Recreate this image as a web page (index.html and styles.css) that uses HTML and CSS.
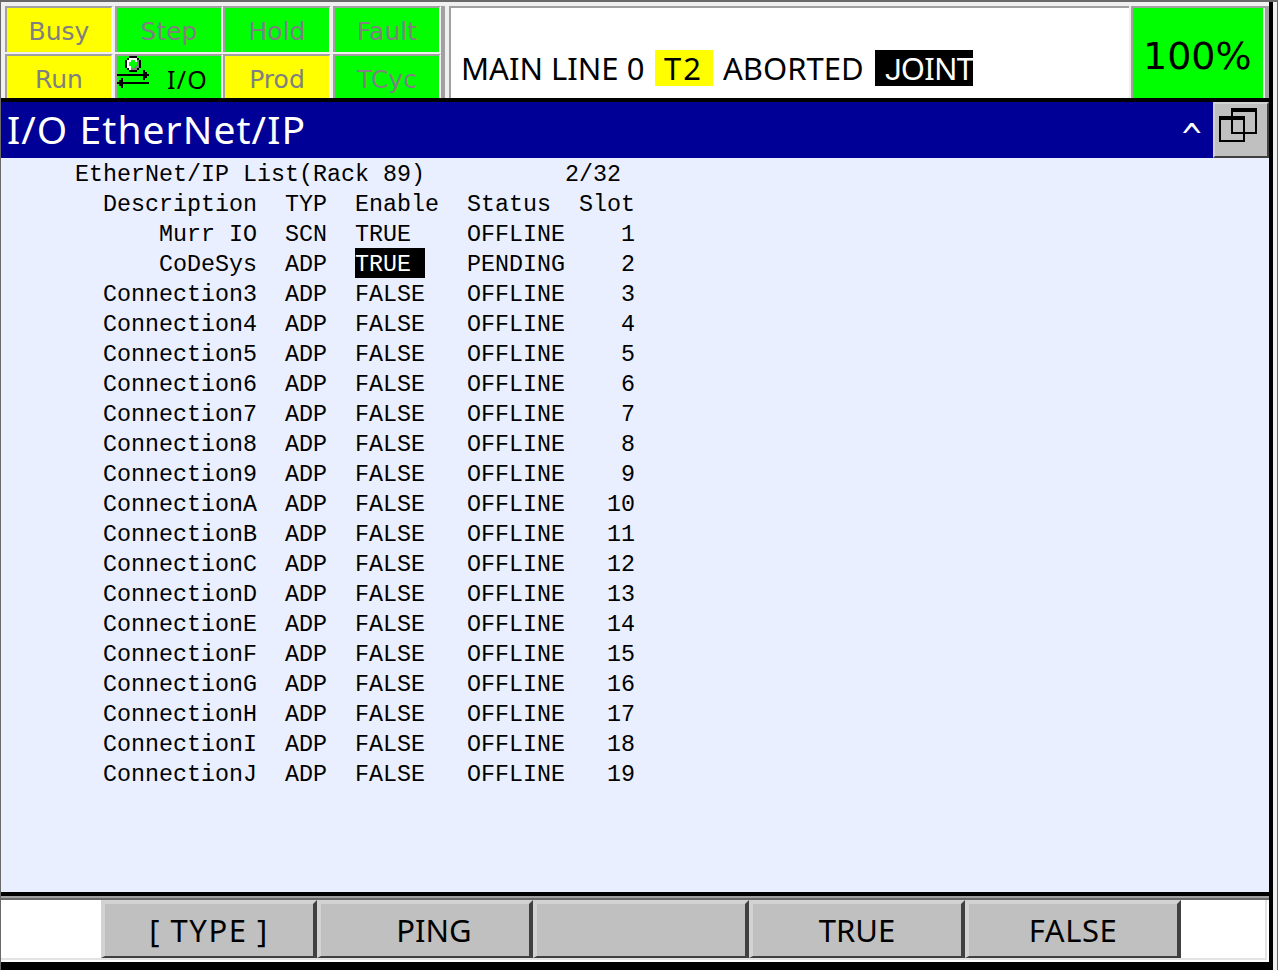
FILE: index.html
```html
<!DOCTYPE html>
<html lang="en">
<head>
<meta charset="utf-8">
<title>I/O EtherNet/IP</title>
<link rel="stylesheet" href="styles.css">
</head>
<body>
<div class="frame">
  <div class="screen">
    <header class="status">
      <div class="lamps">
        <div class="lamp yellow"><span>Busy</span></div>
        <div class="lamp green"><span>Step</span></div>
        <div class="lamp green"><span>Hold</span></div>
        <div class="lamp green"><span>Fault</span></div>
        <div class="lamp yellow low"><span>Run</span></div>
        <div class="lamp green low io">
          <svg class="io-icon" width="32" height="34" viewBox="0 0 32 34" shape-rendering="crispEdges">
            <path d="M0 18h26v-4h2v2h2v2h2v2h-2v2h-2v2h-2v-4H0zM32 26H6v-4H4v2H2v2H0v2h2v2h2v2h2v-4h26z" fill="#000"/>
            <path d="M12 0h8v2h2v2h2v8h-2v2h-2v2h-8v-2h-2v-2H8V4h2V2h2z" fill="#000"/>
            <path d="M12 2h8v2h2v8h-2v2h-8v-2h-2V4h2z" fill="#fff"/>
            <path d="M20 4h2v8h-2v2h-6v-2h4v-2h2z" fill="#808080"/>
            <path d="M14 4h4v2h2v4h-2v2h-4v-2h-2V6h2z" fill="#0f0"/>
          </svg>
          <span>I/O</span>
        </div>
        <div class="lamp yellow low"><span>Prod</span></div>
        <div class="lamp green low"><span>TCyc</span></div>
      </div>
      <div class="message"><span class="prog">MAIN LINE 0</span><span class="mode">T2</span><span class="state">ABORTED</span><span class="coord"><span class="j">J</span>OINT</span></div>
      <div class="override"><span>100%</span></div>
    </header>
    <div class="titlebar">
      <h1>I/O EtherNet/IP</h1>
      <span class="caret">^</span>
      <div class="windows">
        <svg width="38" height="34" viewBox="0 0 38 34" shape-rendering="crispEdges">
          <path fill-rule="evenodd" d="M12 0h26v26H12zM14 4v20h22V4z"/>
          <path fill-rule="evenodd" d="M0 8h26v26H0zM2 12v20h22V12z"/>
        </svg>
      </div>
    </div>
    <main class="list">
      <div class="caption"><span>EtherNet/IP List(Rack 89)</span><span>2/32</span></div>
      <div class="row"><span>Description</span><span>TYP</span><span>Enable</span><span>Status</span><span>Slot</span></div>
      <div class="row"><span>Murr IO</span><span>SCN</span><span>TRUE</span><span>OFFLINE</span><span>1</span></div>
      <div class="row"><span>CoDeSys</span><span>ADP</span><span class="selected">TRUE</span><span>PENDING</span><span>2</span></div>
      <div class="row"><span>Connection3</span><span>ADP</span><span>FALSE</span><span>OFFLINE</span><span>3</span></div>
      <div class="row"><span>Connection4</span><span>ADP</span><span>FALSE</span><span>OFFLINE</span><span>4</span></div>
      <div class="row"><span>Connection5</span><span>ADP</span><span>FALSE</span><span>OFFLINE</span><span>5</span></div>
      <div class="row"><span>Connection6</span><span>ADP</span><span>FALSE</span><span>OFFLINE</span><span>6</span></div>
      <div class="row"><span>Connection7</span><span>ADP</span><span>FALSE</span><span>OFFLINE</span><span>7</span></div>
      <div class="row"><span>Connection8</span><span>ADP</span><span>FALSE</span><span>OFFLINE</span><span>8</span></div>
      <div class="row"><span>Connection9</span><span>ADP</span><span>FALSE</span><span>OFFLINE</span><span>9</span></div>
      <div class="row"><span>ConnectionA</span><span>ADP</span><span>FALSE</span><span>OFFLINE</span><span>10</span></div>
      <div class="row"><span>ConnectionB</span><span>ADP</span><span>FALSE</span><span>OFFLINE</span><span>11</span></div>
      <div class="row"><span>ConnectionC</span><span>ADP</span><span>FALSE</span><span>OFFLINE</span><span>12</span></div>
      <div class="row"><span>ConnectionD</span><span>ADP</span><span>FALSE</span><span>OFFLINE</span><span>13</span></div>
      <div class="row"><span>ConnectionE</span><span>ADP</span><span>FALSE</span><span>OFFLINE</span><span>14</span></div>
      <div class="row"><span>ConnectionF</span><span>ADP</span><span>FALSE</span><span>OFFLINE</span><span>15</span></div>
      <div class="row"><span>ConnectionG</span><span>ADP</span><span>FALSE</span><span>OFFLINE</span><span>16</span></div>
      <div class="row"><span>ConnectionH</span><span>ADP</span><span>FALSE</span><span>OFFLINE</span><span>17</span></div>
      <div class="row"><span>ConnectionI</span><span>ADP</span><span>FALSE</span><span>OFFLINE</span><span>18</span></div>
      <div class="row"><span>ConnectionJ</span><span>ADP</span><span>FALSE</span><span>OFFLINE</span><span>19</span></div>
    </main>
    <nav class="keys">
      <div class="key"><span class="type">[ TYPE ]</span></div>
      <div class="key ping"><span>PING</span></div>
      <div class="key"></div>
      <div class="key"><span>TRUE</span></div>
      <div class="key"><span class="false">FALSE</span></div>
    </nav>
  </div>
</div>
</body>
</html>
```
FILE: styles.css
```css
* { box-sizing: border-box; }
body { margin: 0; width: 1278px; height: 970px; overflow: hidden; background: #f0f0f0; font-family: "Noto Sans", sans-serif; color: #000; }
.frame { width: 1278px; height: 970px; border-left: 1px solid #696969; border-top: 2px solid #696969; border-right: 1px solid #696969; background: #f0f0f0; }
.screen { width: 1272px; height: 968px; border-right: 4px solid #000; border-bottom: 8px solid #000; display: flex; flex-direction: column; }

.status { height: 100px; flex: none; display: flex; background: #f0f0f0; border-bottom: 4px solid #000; padding-top: 4px; }
.lamps { width: 444px; height: 92px; padding-left: 4px; display: grid; grid-template-columns: 110px 108px 110px 108px; grid-template-rows: 48px 44px; border-right: 4px solid #a0a0a0; }
.lamp { height: 46px; width: 108px; border-left: 2px solid #a0a0a0; border-top: 2px solid #a0a0a0; border-right: 2px solid #fff; color: #808080; font: 25px/48px "DejaVu Sans", sans-serif; text-align: center; position: relative; }
.low { height: 44px; }
.yellow { background: #ff0; }
.green { background: #0f0; }
.io { color: #000; font-family: "Noto Sans", sans-serif; letter-spacing: 1.2px; line-height: 46px; display: flex; justify-content: flex-end; padding-right: 13px; }
.io-icon { position: absolute; left: 0; top: 0; }
.message { width: 680px; height: 92px; margin-left: 4px; background: #fff; border-left: 2px solid #a0a0a0; border-top: 2px solid #a0a0a0; display: flex; font-size: 31px; line-height: 36px; padding: 42px 0 8px 10px; white-space: nowrap; }
.message > span { height: 36px; }
.prog { width: 194px; }
.mode { width: 58px; padding-left: 9px; background: #ff0; letter-spacing: 2px; }
.state { width: 162px; padding-left: 10px; }
.coord { width: 98px; padding-left: 10px; background: #000; color: #fff; letter-spacing: -0.8px; }
.j { font-family: Roboto, sans-serif; font-size: 30px; line-height: 30px; }
.override { width: 138px; height: 92px; margin-left: 2px; background: #0f0; border-left: 2px solid #a0a0a0; border-top: 2px solid #a0a0a0; border-right: 4px solid #a0a0a0; box-shadow: inset -2px 0 #f0f0f0; font: 38px/97px "DejaVu Sans", sans-serif; padding-left: 10px; }

.titlebar { height: 56px; flex: none; background: #000096; color: #fff; display: flex; }
h1 { margin: 0; flex: 1; padding-left: 6px; font-size: 39px; line-height: 54px; font-weight: 400; letter-spacing: 1.05px; }
.caret { width: 33px; font: 28px/68px "DejaVu Sans", sans-serif; height: 56px; transform: scaleY(1.3); }
.windows { width: 56px; height: 56px; background: #c0c0c0; border: 2px solid #d2d2d2; border-right-color: #404040; border-bottom-color: #404040; padding: 4px; }
.windows svg { display: block; }

.list { height: 734px; flex: none; background: #e9effe; padding-left: 74px; font: 23.33px/34px "Liberation Mono", monospace; }
.caption, .row { display: grid; height: 30px; white-space: nowrap; }
.caption { grid-template-columns: 490px 70px; }
.row { grid-template-columns: 182px 28px 70px 112px 98px 70px; }
.row span { height: 30px; }
.row span:first-child { text-align: right; }
.row span:nth-child(2) { grid-column: 3; }
.row span:nth-child(5) { text-align: right; }
.row .selected { width: 70px; background: #000; color: #fff; }

.keys { height: 70px; flex: none; border-top: 4px solid #000; background: #fff; box-shadow: inset 0 2px #a0a0a0, inset 0 4px #696969, inset -2px -2px #fff, inset -4px -4px #e3e3e3; padding: 4px 0 0 100px; display: flex; }
.key { width: 216px; height: 58px; background: #c0c0c0; border: 4px solid #d2d2d2; border-right-color: #404040; border-bottom: 2px solid #404040; font-size: 31px; line-height: 53px; text-align: center; }
.key .type { letter-spacing: 1.5px; }
.ping { padding-left: 18px; }
.key .false { letter-spacing: 0.5px; }
```
